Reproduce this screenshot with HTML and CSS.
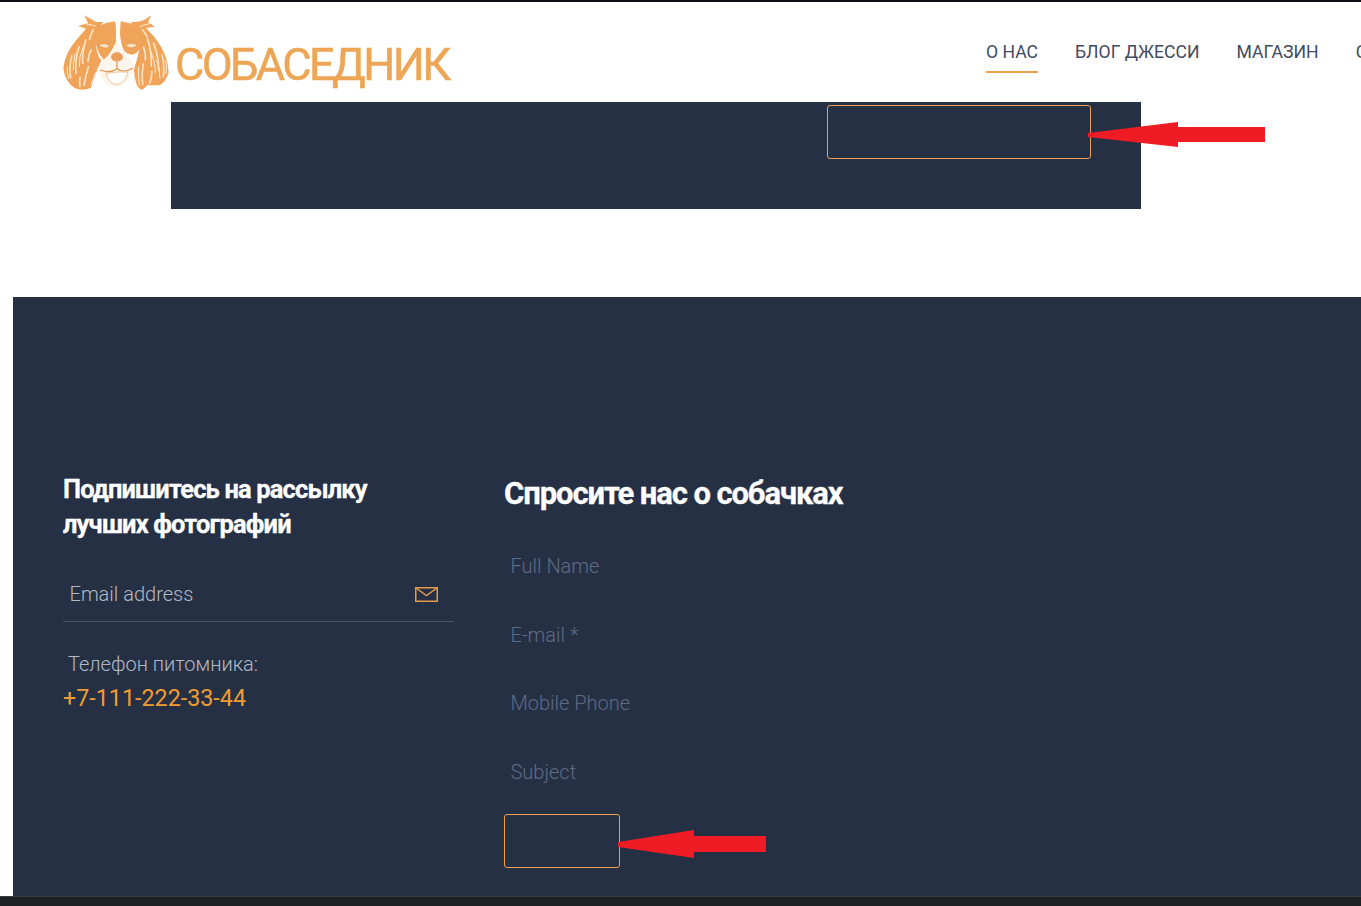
FILE: index.html
```html
<!DOCTYPE html>
<html lang="ru">
<head>
    <meta charset="UTF-8">
    <meta name="viewport" content="width=device-width, initial-scale=1.0">
    <title>Собаседник</title>
    <link rel="stylesheet" href="styles.css">
</head>
<body>
    <header class="site-header">
        <a href="#" class="logo">
            <svg class="logo-dog" viewBox="0 0 345 255" width="115" height="85">
                <!-- ears -->
                <path class="dog-orange" d="M72 16 Q92 26 108 36 L130 36 Q114 54 108 84 Q104 124 124 152 L112 178 Q100 214 92 234 Q66 244 44 234 Q16 216 10 176 Q14 136 38 104 Q54 82 78 56 Q66 52 54 48 Q70 44 84 40 Q80 28 72 16 Z"/>
                <path class="dog-orange" d="M274 16 Q268 28 264 36 Q276 44 284 50 L258 54 Q284 78 302 108 Q324 146 326 188 Q316 218 298 226 L262 226 Q252 236 246 240 Q234 234 230 224 Q222 200 222 176 Q232 150 238 118 Q238 84 232 54 L212 36 Q240 36 252 30 Z"/>
                <!-- head patches -->
                <path class="dog-orange" d="M116 48 Q140 36 166 34 Q170 64 168 92 Q164 116 156 130 Q144 146 132 150 Q112 130 106 92 Q108 66 116 48 Z"/>
                <path class="dog-orange" d="M182 34 Q212 38 236 50 Q244 84 240 116 Q230 132 214 134 Q200 132 192 122 Q180 96 180 66 Z"/>
                <!-- hair streaks -->
                <path class="dog-streak" d="M36 136 Q26 170 32 206 M58 108 Q44 148 48 192 M78 88 Q66 124 68 162 M86 168 Q76 198 72 228 M60 200 Q58 218 60 232 M100 58 Q92 74 88 90 M94 118 Q84 140 84 156"/>
                <path class="dog-streak" d="M280 98 Q296 138 296 182 M262 84 Q276 126 274 170 M306 134 Q314 166 310 202 M250 160 Q244 192 248 226 M276 182 Q276 204 268 222 M246 58 Q256 70 262 82 M250 110 Q258 130 256 152"/>
                <path class="dog-thin" d="M22 170 Q20 190 26 206 M108 186 Q100 206 94 222 M236 170 Q234 198 238 226 M316 150 Q322 170 318 192 M72 40 Q90 44 106 48 M272 40 Q254 44 240 50 M46 130 Q38 160 40 180 M70 110 Q56 140 58 170 M270 120 Q286 150 286 190 M290 150 Q300 176 300 206"/>
                <!-- eyes -->
                <path class="dog-eye" d="M116 106 Q132 94 150 108 Q136 122 116 106 Z"/>
                <path class="dog-eye" d="M196 106 Q214 94 232 106 Q214 122 196 106 Z"/>
                <!-- muzzle -->
                <path class="dog-white" d="M170 92 Q184 112 196 134 Q214 150 224 172 Q214 206 186 228 Q160 234 144 224 Q118 206 112 176 Q128 150 148 132 Q160 112 170 92 Z"/>
                <ellipse class="dog-nose" cx="171" cy="141" rx="18" ry="14"/>
                <path class="dog-line" d="M171 156 V176 M120 180 Q150 192 171 176 Q192 192 218 174"/>
                <path class="dog-mouth" d="M138 190 Q170 184 204 186 Q196 222 170 224 Q146 222 138 190 Z"/>
            </svg>
            <span class="logo-text">СОБАСЕДНИК</span>
        </a>
        <nav class="main-nav">
            <a href="#" class="nav-link active">О НАС</a>
            <a href="#" class="nav-link">БЛОГ ДЖЕССИ</a>
            <a href="#" class="nav-link">МАГАЗИН</a>
            <a href="#" class="nav-link">СОБАКИ</a>
        </nav>
    </header>

    <section class="promo-band">
        <button class="outline-btn promo-btn" type="button"></button>
    </section>

    <footer class="site-footer">
        <div class="subscribe">
            <h3 class="subscribe-title">Подпишитесь на рассылку<br>лучших фотографий</h3>
            <div class="subscribe-field">
                <input class="subscribe-input" type="text" placeholder="Email address">
                <svg class="mail-icon" viewBox="0 0 23 15" width="23" height="15">
                    <rect x="0.75" y="0.75" width="21.5" height="13.5"/>
                    <path d="M1 1 L11.5 8.5 L22 1"/>
                </svg>
            </div>
            <p class="phone-label">Телефон питомника:</p>
            <a href="#" class="phone">+7-111-222-33-44</a>
        </div>
        <form class="ask-form">
            <h2 class="ask-title">Спросите нас о собачках</h2>
            <input class="ask-input first" type="text" placeholder="Full Name">
            <input class="ask-input" type="text" placeholder="E-mail *">
            <input class="ask-input" type="text" placeholder="Mobile Phone">
            <input class="ask-input" type="text" placeholder="Subject">
            <button class="outline-btn send-btn" type="button"></button>
        </form>
    </footer>
    <div class="bottom-bar"></div>

    <!-- red arrows drawn on top of the screenshot -->
    <svg class="arrow arrow-top" viewBox="0 0 177 25" width="177" height="25">
        <path d="M0 11 L90 0 V5 H177 V20 H90 V25 L0 15 Z"/>
    </svg>
    <svg class="arrow arrow-bottom" viewBox="0 0 148 28" width="148" height="28">
        <path d="M0 12 L76 0 V6 H148 V22 H76 V28 L0 17 Z"/>
    </svg>
</body>
</html>
```

FILE: styles.css
```css
* {
    margin: 0;
    padding: 0;
    box-sizing: border-box;
}

html, body {
    height: 906px;
    overflow: hidden;
}

body {
    font-family: Roboto, 'Liberation Sans', sans-serif;
    background: #fff;
    border-top: 2px solid #0b0d14;
}

.site-header {
    height: 100px;
    display: flex;
    padding-left: 60px;
    overflow: hidden;
}

.logo {
    display: flex;
    align-items: flex-start;
    width: 926px;
    flex: none;
    padding-top: 8px;
    text-decoration: none;
}

.logo-text {
    font-size: 45px;
    line-height: 52px;
    letter-spacing: -2.6px;
    margin-top: 29px;
    color: #eda655;
    -webkit-text-stroke: 0.5px #eda655;
    filter: blur(0.5px);
}

.logo-dog {
    filter: blur(0.6px);
}

.dog-orange {
    fill: #f0a45a;
}

.dog-streak {
    fill: none;
    stroke: #fbe3c4;
    stroke-width: 5;
}

.dog-thin {
    fill: none;
    stroke: #fdeedb;
    stroke-width: 3;
}

.dog-white {
    fill: #fef6ec;
}

.dog-eye {
    fill: #fbe3c4;
    stroke: #d98f44;
    stroke-width: 2;
}

.dog-nose {
    fill: #ea9f5e;
}

.dog-line {
    fill: none;
    stroke: #e39a50;
    stroke-width: 4;
}

.dog-mouth {
    fill: #fff;
    stroke: #f3c493;
    stroke-width: 3;
}

.main-nav {
    display: flex;
    flex: none;
    gap: 37px;
    padding-top: 38px;
}

.nav-link {
    height: 33px;
    font-size: 17.6px;
    line-height: 24px;
    color: #414b5f;
    text-decoration: none;
    white-space: nowrap;
}

.nav-link.active {
    border-bottom: 2px solid #f0a24e;
}

.promo-band {
    width: 970px;
    height: 107px;
    margin-left: 171px;
    padding: 3px 0 0 656px;
    background: #253045;
}

.outline-btn {
    display: block;
    height: 54px;
    background: transparent;
    border: 1px solid #ee9f4f;
    border-radius: 3px;
}

.promo-btn {
    width: 264px;
}

.site-footer {
    height: 599px;
    margin: 88px 0 0 13px;
    padding: 175px 24px 0 50px;
    display: grid;
    grid-template-columns: 391px 1fr;
    gap: 50px;
    background: #253045;
}

.subscribe-title {
    font-size: 25.5px;
    line-height: 35px;
    letter-spacing: -0.85px;
    font-weight: 700;
    color: #fff;
    -webkit-text-stroke: 0.3px #fff;
}

.subscribe-field {
    display: flex;
    align-items: center;
    height: 60px;
    margin-top: 20px;
    padding: 5px 16px 0 6.5px;
    border-bottom: 1px solid #4b5566;
}

.subscribe-input {
    flex: 1;
    border: none;
    outline: none;
    background: transparent;
    font-family: inherit;
    font-size: 20px;
    font-weight: 300;
    color: #b4b9c2;
}

.subscribe-input::placeholder {
    color: #b4b9c2;
    opacity: 1;
}

.mail-icon {
    fill: none;
    stroke: #e39a4e;
    stroke-width: 1.5;
}

.phone-label {
    margin-top: 29px;
    padding-left: 5px;
    font-size: 20px;
    line-height: 26px;
    font-weight: 300;
    color: #b4b9c2;
}

.phone {
    display: block;
    margin-top: 6px;
    font-size: 23.3px;
    line-height: 30px;
    color: #f09c33;
    text-decoration: none;
}

.ask-form {
    display: flex;
    flex-direction: column;
    align-items: flex-start;
}

.ask-title {
    margin-top: 4px;
    margin-bottom: -1px;
    font-size: 31px;
    line-height: 35px;
    letter-spacing: -1.1px;
    font-weight: 700;
    color: #fff;
    -webkit-text-stroke: 0.3px #fff;
}

.ask-input {
    display: block;
    width: 100%;
    height: 68.67px;
    padding: 12px 6.5px 0;
    border: none;
    border-bottom: 1px solid #222c3f;
    outline: none;
    background: transparent;
    font-family: inherit;
    font-size: 20px;
    font-weight: 300;
    color: #fff;
}

.ask-input::placeholder {
    color: #5f6b83;
    opacity: 1;
}

.ask-input.first {
    height: 85px;
    padding-top: 28px;
}

.send-btn {
    width: 116px;
    margin-top: 13px;
}

.bottom-bar {
    height: 10px;
    background: #1f2021;
    border-top: 1px solid #3a3b3c;
}

.arrow {
    position: absolute;
    fill: #ef1c25;
}

.arrow-top {
    left: 1088px;
    top: 122px;
}

.arrow-bottom {
    left: 618px;
    top: 830px;
}
```
